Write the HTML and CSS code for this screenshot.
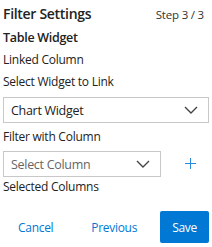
FILE: index.html
```html
<!DOCTYPE html>
<html>
<head>
<meta charset="utf-8">
<link rel="stylesheet" href="styles.css">
</head>
<body>
<div class="panel">
  <div class="header">
    <span class="title">Filter Settings</span>
    <span class="step">Step 3 / 3</span>
  </div>
  <div class="widget-name">Table Widget</div>
  <div class="label linked">Linked Column</div>
  <div class="label">Select Widget to Link</div>
  <div class="select full">
    <span class="value">Chart Widget</span>
    <svg class="chev" width="14" height="8" viewBox="0 0 14 8"><path d="M1 1 L7 7 L13 1" fill="none" stroke="#444" stroke-width="1.4"/></svg>
  </div>
  <div class="label">Filter with Column</div>
  <div class="row">
    <div class="select short">
      <span class="value placeholder">Select Column</span>
      <svg class="chev" width="14" height="8" viewBox="0 0 14 8"><path d="M1 1 L7 7 L13 1" fill="none" stroke="#444" stroke-width="1.4"/></svg>
    </div>
    <svg class="plus" width="11" height="11" viewBox="0 0 11 11"><path d="M5.5 0 V11 M0 5.5 H11" stroke="#2b88d8" stroke-width="1"/></svg>
  </div>
  <div class="label selected">Selected Columns</div>
  <div class="footer">
    <button class="link-btn">Cancel</button>
    <button class="link-btn">Previous</button>
    <button class="primary">Save</button>
  </div>
</div>
</body>
</html>
```
FILE: styles.css
```css
html, body {
  margin: 0;
  padding: 0;
  background: #fff;
}
body {
  font-family: "Open Sans", "Noto Sans", sans-serif;
  color: #222;
}
.panel {
  width: 206px;
  padding: 0 3px;
  display: flex;
  flex-direction: column;
}
.header {
  display: flex;
  justify-content: space-between;
  align-items: baseline;
  height: 27px;
  padding-top: 4px;
  box-sizing: border-box;
}
.title {
  font-size: 14px;
  font-weight: 600;
  letter-spacing: -0.3px;
}
.step {
  font-size: 11.5px;
  font-weight: 500;
  color: #333;
  letter-spacing: -0.2px;
  padding-right: 5px;
}
.widget-name {
  font-size: 12.5px;
  font-weight: 600;
  letter-spacing: -0.3px;
  height: 22px;
  line-height: 22px;
}
.label {
  font-size: 12px;
  letter-spacing: -0.25px;
  height: 22px;
  line-height: 22px;
}
.select {
  box-sizing: border-box;
  height: 26px;
  border: 1px solid #c8c8c8;
  display: flex;
  align-items: center;
  justify-content: space-between;
  padding: 0 10px 0 7px;
  font-size: 12.5px;
  letter-spacing: -0.3px;
  margin: 4px 0 3px;
}
.select.full {
  width: 206px;
}
.select.short {
  width: 158px;
  margin: 3px 0 0;
}
.placeholder {
  color: #666;
}
.row {
  display: flex;
  align-items: center;
}
.plus {
  margin-left: 24px;
  margin-top: 2px;
}
.label.selected {
  height: 20px;
  line-height: 20px;
}
.footer {
  display: flex;
  align-items: center;
  margin-top: 14px;
}
button {
  font-family: inherit;
  font-size: 12px;
  letter-spacing: -0.3px;
  border: none;
  background: none;
  padding: 0;
  cursor: pointer;
}
.link-btn {
  color: #0078d4;
}
.link-btn:first-child {
  margin-left: 15px;
}
.link-btn:nth-child(2) {
  margin-left: 38px;
}
.primary {
  margin-left: 23px;
  width: 53px;
  height: 32px;
  background: #0078d4;
  color: #fff;
  border-radius: 2px;
}
```
